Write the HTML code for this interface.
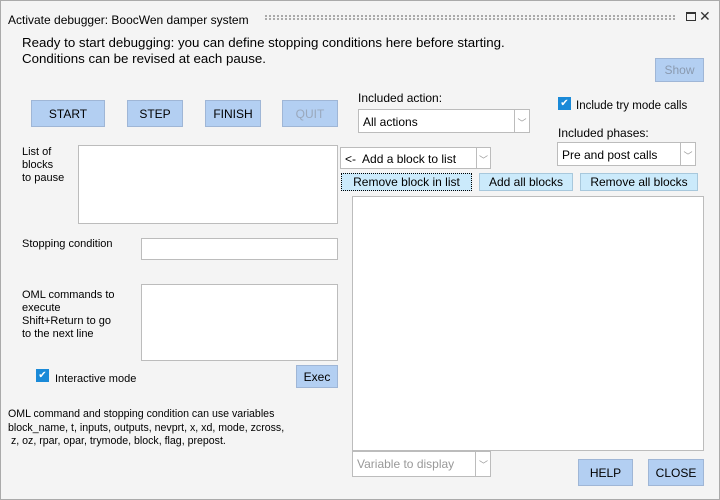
<!DOCTYPE html>
<html><head><style>
*{margin:0;padding:0;box-sizing:border-box}
body{width:720px;height:500px;background:#f4f4f4;font-family:"Liberation Sans",sans-serif;font-size:11px;color:#000;position:relative;overflow:hidden}
.a{position:absolute;white-space:nowrap}
.win{position:absolute;left:0;top:0;width:720px;height:500px;border:1px solid #aaa}
.btn{position:absolute;background:#b3cff2;border:1px solid #9fb6d6;display:flex;align-items:center;justify-content:center;font-size:12px}
.cb{position:absolute;background:#cbeafb;border:1px solid #a8c8dc;display:flex;align-items:center;justify-content:center;font-size:12px}
.box{position:absolute;background:#fff;border:1px solid #bcbcbc}
.combo{position:absolute;background:#fff;border:1px solid #bcbcbc;font-size:12px;padding:5px 0 0 4px}
.arr{position:absolute;top:-1px;right:-1px;bottom:-1px;width:16px;border:1px solid #bcbcbc;background:#fff;color:#999;font-size:9px;text-align:center;padding-top:6px}
.chk{position:absolute;width:13px;height:13px;background:#1a8ad8;color:#fff;font-size:10px;line-height:13px;text-align:center}
</style></head><body>
<div class="win"></div>
<div class="a" style="left:8px;top:13px;font-size:12px">Activate debugger: BoocWen damper system</div>
<div class="a" style="left:265px;top:15px;width:410px;height:5px;border-top:2px dotted #aaa;border-bottom:2px dotted #aaa"></div>
<div class="a" style="left:686px;top:12px;width:10px;height:9px;border:1px solid #333;border-top-width:2px"></div>
<div class="a" style="left:699px;top:8px;font-size:14px;color:#333">✕</div>
<div class="a" style="left:22px;top:35px;font-size:13.3px;line-height:16px">Ready to start debugging: you can define stopping conditions here before starting.<br>Conditions can be revised at each pause.</div>
<div class="btn" style="left:655px;top:58px;width:49px;height:24px;color:#8a9ab0">Show</div>
<div class="btn" style="left:31px;top:100px;width:74px;height:27px">START</div>
<div class="btn" style="left:127px;top:100px;width:56px;height:27px">STEP</div>
<div class="btn" style="left:205px;top:100px;width:56px;height:27px">FINISH</div>
<div class="btn" style="left:282px;top:100px;width:56px;height:27px;color:#9aa8bc">QUIT</div>
<div class="a" style="left:358px;top:91px;font-size:12px">Included action:</div>
<div class="combo" style="left:358px;top:109px;width:172px;height:24px">All actions<div class="arr">﹀</div></div>
<div class="chk" style="left:558px;top:97px">✔</div>
<div class="a" style="left:576px;top:100px;font-size:11.5px">Include try mode calls</div>
<div class="a" style="left:558px;top:126px;font-size:12px">Included phases:</div>
<div class="combo" style="left:557px;top:142px;width:139px;height:24px">Pre and post calls<div class="arr">﹀</div></div>
<div class="a" style="left:22px;top:146px;line-height:13px">List of<br>blocks<br>to pause</div>
<div class="box" style="left:78px;top:145px;width:260px;height:79px"></div>
<div class="combo" style="left:340px;top:147px;width:137px;height:22px;padding-top:4px">&lt;-&nbsp; Add a block to list</div>
<div class="combo" style="left:476px;top:147px;width:15px;height:22px;padding:5px 0 0 2px;color:#999;font-size:9px">﹀</div>
<div class="cb" style="left:341px;top:173px;width:131px;height:18px;border:1px dotted #000">Remove block in list</div>
<div class="cb" style="left:479px;top:173px;width:94px;height:18px">Add all blocks</div>
<div class="cb" style="left:580px;top:173px;width:118px;height:18px">Remove all blocks</div>
<div class="box" style="left:352px;top:196px;width:352px;height:255px"></div>
<div class="a" style="left:22px;top:238px">Stopping condition</div>
<div class="box" style="left:141px;top:238px;width:197px;height:22px"></div>
<div class="a" style="left:22px;top:289px;line-height:13px">OML commands to<br>execute<br>Shift+Return to go<br>to the next line</div>
<div class="box" style="left:141px;top:284px;width:197px;height:77px"></div>
<div class="chk" style="left:36px;top:369px">✔</div>
<div class="a" style="left:55px;top:373px;font-size:11px">Interactive mode</div>
<div class="btn" style="left:296px;top:365px;width:42px;height:23px">Exec</div>
<div class="a" style="left:8px;top:408px;line-height:13.5px;font-size:10.6px">OML command and stopping condition can use variables<br>block_name, t, inputs, outputs, nevprt, x, xd, mode, zcross,<br>&nbsp;z, oz, rpar, opar, trymode, block, flag, prepost.</div>
<div class="combo" style="left:352px;top:451px;width:124px;height:26px;color:#999">Variable to display</div>
<div class="combo" style="left:475px;top:451px;width:16px;height:26px;padding:6px 0 0 3px;color:#999;font-size:9px">﹀</div>
<div class="btn" style="left:578px;top:459px;width:55px;height:27px">HELP</div>
<div class="btn" style="left:648px;top:459px;width:56px;height:27px">CLOSE</div>
</body></html>
